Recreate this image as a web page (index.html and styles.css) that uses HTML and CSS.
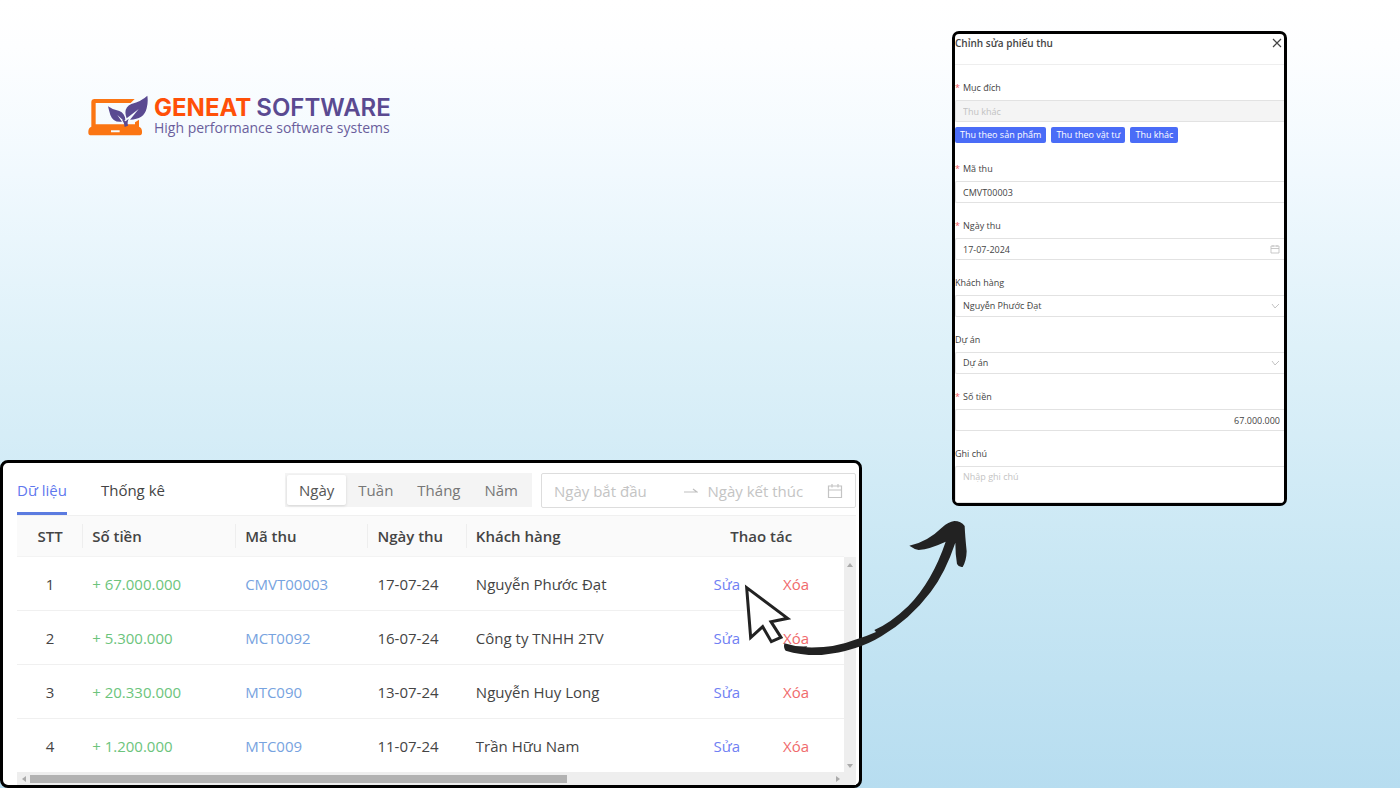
FILE: index.html
```html
<!DOCTYPE html>
<html lang="vi">
<head>
<meta charset="utf-8">
<meta name="viewport" content="width=device-width, initial-scale=1">
<title>Geneat Software – Chỉnh sửa phiếu thu</title>
<link rel="stylesheet" href="styles.css">
</head>
<body>
<main class="stage">
  <div class="stage-left">
    <header class="brand">
      <svg class="brand-mark" viewBox="0 0 180 123" aria-hidden="true">
        <path fill="#fb7513" fill-rule="evenodd" d="M20 12H140L128 24H23V88H141V82L153 74V95Q162 99 162 109V113Q162 121 152 121H10Q1 121 1 113V109Q1 99 10 95V22Q10 12 20 12ZM69 106V112H95V106Z"/>
        <path fill="#5a4a91" d="M60 34Q76 46 94 48Q110 54 112 74L108 78L88 60L102 80Q76 84 67 60Q64 50 60 34ZM178 2Q181 22 176 40Q168 74 126 74L152 42L116 70Q104 39 130 27Q160 19 178 2ZM102 74L113 79L122 71Q117 82 120 92L110 96Q110 84 102 74Z"/>
      </svg>
      <div class="brand-text">
        <div class="brand-name"><span class="brand-accent">GENEAT</span> <span>SOFTWARE</span></div>
        <div class="brand-tagline">High performance software systems</div>
      </div>
    </header>

    <section class="records">
      <div class="toolbar">
        <nav class="tabs">
          <button class="tab tab-active" type="button">Dữ liệu</button>
          <button class="tab" type="button">Thống kê</button>
        </nav>
        <div class="segmented">
          <button class="segment segment-active" type="button">Ngày</button>
          <button class="segment" type="button">Tuần</button>
          <button class="segment" type="button">Tháng</button>
          <button class="segment" type="button">Năm</button>
        </div>
        <div class="range">
          <input class="range-input" type="text" placeholder="Ngày bắt đầu" aria-label="Ngày bắt đầu">
          <svg class="range-arrow" viewBox="0 0 14 10" aria-hidden="true"><path d="M0 6H13L9 3" fill="none" stroke="#bfbfbf" stroke-width="1.2"/></svg>
          <input class="range-input" type="text" placeholder="Ngày kết thúc" aria-label="Ngày kết thúc">
          <svg class="range-calendar" viewBox="0 0 16 16" aria-hidden="true"><path d="M1.500 3H14.500V14.500H1.500ZM1.500 7H14.500M5 1V4.500M11 1V4.500" fill="none" stroke="#c4c4c4" stroke-width="1.200"/></svg>
        </div>
      </div>

      <div class="table-wrap">
        <table class="table">
          <colgroup><col class="col-index"><col class="col-amount"><col class="col-code"><col class="col-date"><col class="col-customer"><col class="col-actions"></colgroup>
          <thead>
            <tr><th class="center">STT</th><th>Số tiền</th><th>Mã thu</th><th>Ngày thu</th><th>Khách hàng</th><th class="center">Thao tác</th></tr>
          </thead>
          <tbody>
            <tr><td class="center">1</td><td class="amount">+ 67.000.000</td><td><a class="code" href="#">CMVT00003</a></td><td>17-07-24</td><td>Nguyễn Phước Đạt</td><td><div class="actions"><button class="edit" type="button">Sửa</button><button class="delete" type="button">Xóa</button></div></td></tr>
            <tr><td class="center">2</td><td class="amount">+ 5.300.000</td><td><a class="code" href="#">MCT0092</a></td><td>16-07-24</td><td>Công ty TNHH 2TV</td><td><div class="actions"><button class="edit" type="button">Sửa</button><button class="delete" type="button">Xóa</button></div></td></tr>
            <tr><td class="center">3</td><td class="amount">+ 20.330.000</td><td><a class="code" href="#">MTC090</a></td><td>13-07-24</td><td>Nguyễn Huy Long</td><td><div class="actions"><button class="edit" type="button">Sửa</button><button class="delete" type="button">Xóa</button></div></td></tr>
            <tr><td class="center">4</td><td class="amount">+ 1.200.000</td><td><a class="code" href="#">MTC009</a></td><td>11-07-24</td><td>Trần Hữu Nam</td><td><div class="actions"><button class="edit" type="button">Sửa</button><button class="delete" type="button">Xóa</button></div></td></tr>
          </tbody>
        </table>
        <div class="scroll-y">
          <svg class="scroll-tip" viewBox="0 0 6 6" aria-hidden="true"><path d="M0 5L3 1L6 5Z"/></svg>
          <svg class="scroll-tip" viewBox="0 0 6 6" aria-hidden="true"><path d="M0 1L3 5L6 1Z"/></svg>
        </div>
      </div>
      <div class="scroll-x">
        <svg class="scroll-tip" viewBox="0 0 6 6" aria-hidden="true"><path d="M5 0L1 3L5 6Z"/></svg>
        <div class="scroll-track"><div class="scroll-thumb"></div></div>
        <svg class="scroll-tip" viewBox="0 0 6 6" aria-hidden="true"><path d="M1 0L5 3L1 6Z"/></svg>
      </div>

      <svg class="pointer" viewBox="0 0 750 480" aria-hidden="true">
        <path fill="#fff" stroke="#222" stroke-width="9" d="M50 233L173 325L123 335L153 382L124 395L98 350L62 383Z"/>
        <path fill="#222" d="M163 400Q195 411 232 409L229 412Q310 415 375 389Q405 381 438 366L433 360Q482 339 535 288Q607 214 647 95Q600 117 566 120Q552 117 538 107Q590 98 637 52Q655 35 673 33Q693 33 704 48Q705 75 710 124Q709 153 698 171Q687 173 681 162Q676 133 676 98Q646 188 602 246Q541 327 454 379Q381 424 275 435Q216 437 167 422Q160 415 163 400Z"/>
      </svg>
    </section>
  </div>

  <div class="stage-right">
    <form class="dialog">
      <div class="dialog-head">
        <h1 class="dialog-title">Chỉnh sửa phiếu thu</h1>
        <button class="dialog-close" type="button" aria-label="Đóng"><svg class="close-icon" viewBox="0 0 10 10" aria-hidden="true"><path d="M1 1L9 9M9 1L1 9" stroke="#444" stroke-width="1.200"/></svg></button>
      </div>
      <div class="dialog-body">
        <div class="field">
          <label class="label required" for="purpose">Mục đích</label>
          <input class="control" id="purpose" type="text" value="Thu khác" disabled>
          <div class="tags">
            <button class="tag" type="button">Thu theo sản phẩm</button>
            <button class="tag" type="button">Thu theo vật tư</button>
            <button class="tag" type="button">Thu khác</button>
          </div>
        </div>
        <div class="field">
          <label class="label required" for="code">Mã thu</label>
          <input class="control" id="code" type="text" value="CMVT00003">
        </div>
        <div class="field">
          <label class="label required" for="date">Ngày thu</label>
          <div class="control-wrap">
            <input class="control" id="date" type="text" value="17-07-2024">
            <svg class="control-icon" viewBox="0 0 10 10" aria-hidden="true"><path d="M1 2H9V9H1ZM1 4.500H9M3 1V3M7 1V3" fill="none" stroke="#bbb" stroke-width=".8"/></svg>
          </div>
        </div>
        <div class="field">
          <label class="label" for="customer">Khách hàng</label>
          <div class="control-wrap">
            <select class="control" id="customer"><option>Nguyễn Phước Đạt</option></select>
            <svg class="control-icon" viewBox="0 0 10 10" aria-hidden="true"><path d="M2 3L5 7L9 3" fill="none" stroke="#c4c4c4"/></svg>
          </div>
        </div>
        <div class="field">
          <label class="label" for="project">Dự án</label>
          <div class="control-wrap">
            <select class="control" id="project"><option>Dự án</option></select>
            <svg class="control-icon" viewBox="0 0 10 10" aria-hidden="true"><path d="M2 3L5 7L9 3" fill="none" stroke="#c4c4c4"/></svg>
          </div>
        </div>
        <div class="field">
          <label class="label required" for="amount">Số tiền</label>
          <input class="control control-number" id="amount" type="text" value="67.000.000">
        </div>
        <div class="field">
          <label class="label" for="note">Ghi chú</label>
          <textarea class="control control-note" id="note" placeholder="Nhập ghi chú"></textarea>
        </div>
      </div>
    </form>
  </div>
</main>
</body>
</html>
```
FILE: styles.css
```css
* {
  box-sizing: border-box;
}

body {
  margin: 0;
  font-family: "Open Sans", "Noto Sans", sans-serif;
  color: #444;
}

button,
input,
select,
textarea {
  font: inherit;
  color: inherit;
}

button {
  padding: 0;
  border: 0;
  background: none;
  white-space: nowrap;
  cursor: pointer;
}

.stage {
  display: grid;
  grid-template-columns: minmax(0, 862fr) minmax(0, 538fr);
  min-height: 100vh;
  background: linear-gradient(180deg, #fff 0%, #fdfeff 6%, #f1f9fe 22%, #def1f9 44%, #c9e7f4 72%, #b7ddf0 100%);
}

.stage-left {
  display: flex;
  flex-direction: column;
  justify-content: space-between;
}

.stage-right {
  padding: 31px 113px 32px 90px;
}

/* Brand */

.brand {
  display: flex;
  gap: 6px;
  padding: 95px 88px 32px;
}

.brand-mark {
  width: 60px;
  height: 41px;
}

.brand-name {
  display: flex;
  gap: 5px;
  font: 600 24px/26px Inter, sans-serif;
  color: #5a4a91;
}

.brand-accent {
  font-weight: 700;
  color: #ff5008;
}

.brand-tagline {
  font-size: 14px;
  line-height: 14px;
  color: #6a5e9c;
}

/* Records panel */

.records {
  position: relative;
  padding: 10px 3px 0 14px;
  border: 3px solid #000;
  border-radius: 8px;
  background: #fff;
  font-size: 15px;
}

.toolbar {
  display: flex;
  align-items: flex-start;
  border-bottom: 1px solid #f0f0f0;
}

.tabs {
  display: flex;
  flex: 1;
  gap: 34px;
}

.tab {
  height: 42px;
  padding-bottom: 5px;
  border-bottom: 3px solid transparent;
}

.tab-active {
  border-color: #5b7be0;
  color: #5f78ee;
}

.segmented {
  display: flex;
  height: 34px;
  margin-right: 9px;
  padding: 2px;
  background: #f4f4f4;
  color: #777;
}

.segment {
  padding: 0 12px;
}

.segment-active {
  border-radius: 2px;
  background: #fff;
  box-shadow: 0 1px 3px #0002;
  color: #555;
}

.range {
  display: flex;
  align-items: center;
  width: 315px;
  height: 35px;
  padding: 0 12px;
  border: 1px solid #ddd;
  border-radius: 2px;
}

.range-input {
  flex: 1;
  min-width: 0;
  padding: 0;
  border: 0;
  outline: 0;
  background: none;
}

.range-input::placeholder {
  color: #c4c4c4;
  opacity: 1;
}

.range-arrow {
  width: 14px;
  height: 10px;
  margin: 0 10px;
}

.range-calendar {
  width: 16px;
  height: 16px;
}

.table-wrap {
  display: flex;
  background: #fafafa;
}

.table {
  flex: 1;
  min-width: 0;
  table-layout: fixed;
  border-collapse: separate;
  border-spacing: 0;
}

.col-index { width: 8%; }
.col-amount { width: 18.500%; }
.col-code { width: 16%; }
.col-date { width: 11.900%; }
.col-customer { width: 25.600%; }
.col-actions { width: 20%; }

.table th,
.table td {
  padding: 0 9px;
  text-align: left;
  white-space: nowrap;
}

.table th {
  height: 41px;
  border-bottom: 1px solid #f3f3f3;
  background: linear-gradient(#eee, #eee) right center / 1px 24px no-repeat;
  font-weight: 600;
}

.table th:nth-last-child(-n+2) {
  background: none;
}

.table td {
  height: 54px;
  border-bottom: 1px solid #f0f0f0;
  background: #fff;
}

.table tbody tr:last-child td {
  height: 53px;
  border-bottom: 0;
}

.table .center {
  text-align: center;
}

.table .amount {
  color: #6cc47c;
}

.code {
  color: #77a3e0;
  text-decoration: none;
}

.actions {
  display: flex;
  justify-content: center;
  gap: 43px;
}

.edit {
  color: #6f80f3;
}

.delete {
  color: #f06a6c;
}

.scroll-y {
  display: flex;
  flex-direction: column;
  align-items: center;
  justify-content: space-between;
  width: 12px;
  margin-top: 41px;
  padding: 5px 0 3px;
  background: #eee;
}

.scroll-x {
  display: flex;
  align-items: center;
  gap: 3px;
  height: 13px;
  padding: 0 15px 0 4px;
  background: #eee;
}

.scroll-tip {
  width: 6px;
  height: 6px;
  fill: #aaa;
}

.scroll-track {
  flex: 1;
}

.scroll-thumb {
  width: 67%;
  height: 8px;
  background: #b2b2b2;
}

.pointer {
  position: absolute;
  top: 47px;
  right: -121px;
  width: 250px;
  height: 160px;
  pointer-events: none;
}

/* Receipt dialog */

.dialog {
  overflow: hidden;
  border: 3px solid #000;
  border-radius: 7px;
  background: #fff;
  font-size: 9px;
  line-height: 16px;
}

.dialog-head {
  display: flex;
  align-items: flex-start;
  justify-content: space-between;
  padding: 1px 2px 13px 0;
  border-bottom: 1px solid #eee;
}

.dialog-title {
  margin: 0;
  font-size: 10px;
  font-weight: 600;
  line-height: 16px;
}

.dialog-close {
  display: flex;
  padding: 3px 0;
}

.close-icon {
  width: 10px;
  height: 10px;
}

.dialog-body {
  display: flex;
  flex-direction: column;
  gap: 15px;
  padding-top: 15px;
}

.field {
  display: flex;
  flex-direction: column;
  gap: 4px;
}

.required::before {
  content: "*";
  margin-right: 3px;
  color: #f05a5c;
}

.control {
  display: block;
  width: 100%;
  height: 22px;
  padding: 0 7px;
  border: 1px solid #e2e2e2;
  border-right: 0;
  border-radius: 2px 0 0 2px;
  outline: 0;
  appearance: none;
  background: #fff;
}

.control:disabled {
  background: #f4f4f4;
  color: #c2c2c2;
  opacity: 1;
}

.control-wrap {
  position: relative;
}

.control-icon {
  position: absolute;
  top: 6px;
  right: 4px;
  width: 10px;
  height: 10px;
  pointer-events: none;
}

.control-number {
  padding-right: 4px;
  text-align: right;
}

.control-note {
  height: 37px;
  padding: 2px 7px;
  resize: none;
}

.control-note::placeholder {
  color: #c4c4c4;
  opacity: 1;
}

.tags {
  display: flex;
  gap: 5px;
  padding: 1px 0 3px;
}

.tag {
  height: 16px;
  padding: 0 5px;
  border-radius: 2px;
  background: #4a6cf7;
  color: #fff;
}
```
